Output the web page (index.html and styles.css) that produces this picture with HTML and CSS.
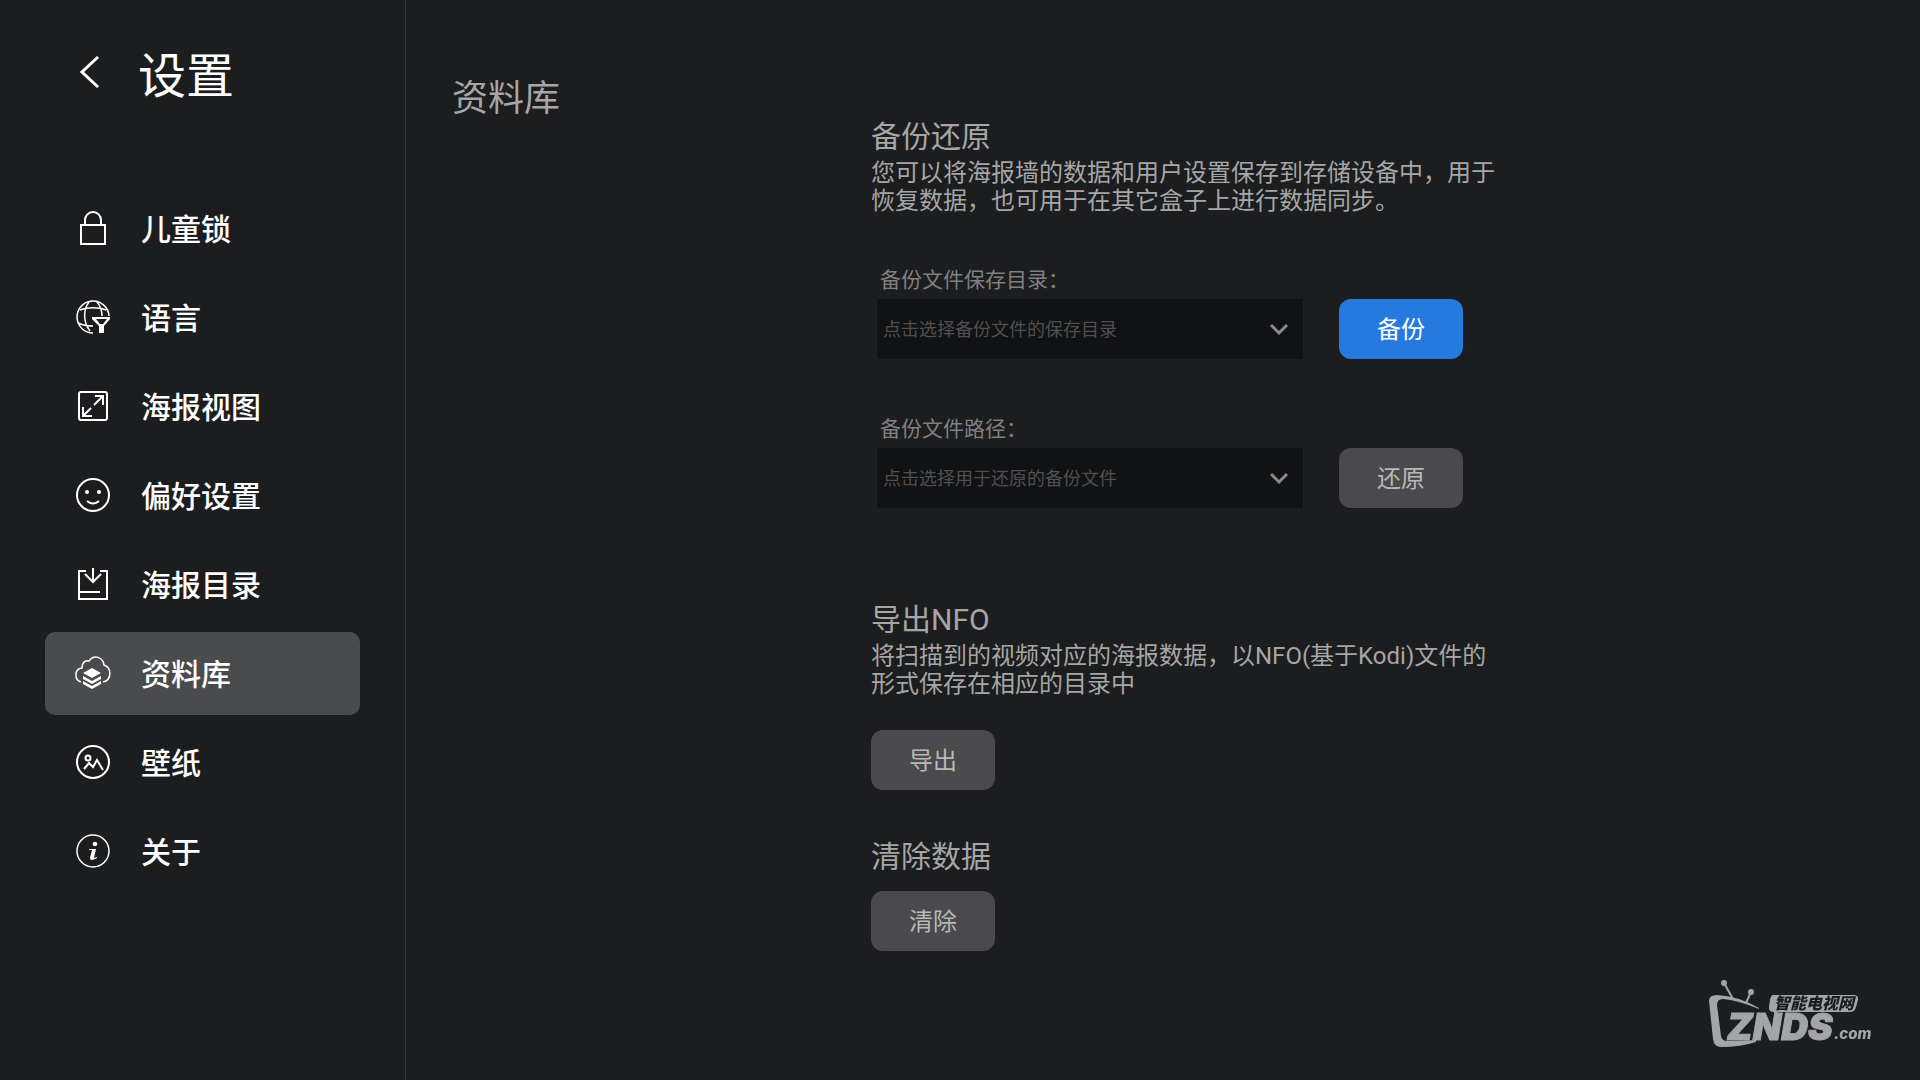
FILE: index.html
```html
<!DOCTYPE html>
<html lang="zh-CN">
  <head>
    <meta charset="UTF-8" />
    <meta name="viewport" content="width=device-width, initial-scale=1.0" />
    <title>设置 - 资料库</title>
    <link rel="stylesheet" href="styles.css">
  </head>
  <body>
    <aside class="sidebar">
      <header class="sidebar-header">
        <button class="back" type="button" aria-label="返回">
          <svg width="20" height="34" viewBox="0 0 20 34"><path d="M18 2 2 17l16 15" /></svg>
        </button>
        <h1>设置</h1>
      </header>
      <nav class="menu">
        <a class="menu-item" href="#lock">
          <svg class="icon" viewBox="0 0 36 36"><path d="M6 15h24v19H6zM10 15V10a8 8 0 0 1 16 0v5" /></svg>
          <span>儿童锁</span>
        </a>
        <a class="menu-item" href="#language">
          <svg class="icon thin" viewBox="0 0 36 36">
            <path d="M18 34A16 16 0 1 1 34 17M5 11c7-3 19-3 26 0M3 24c4 2 9 3 15 3M14 3c-6 8-6 20 1 29M22 3q5 6 5 14" />
            <path class="fill" d="M17 18h18v2l-6 7v7h-5v-7l-7-7zm4 2 4 5h3l4-5z" />
          </svg>
          <span>语言</span>
        </a>
        <a class="menu-item" href="#view">
          <svg class="icon" viewBox="0 0 36 36"><rect x="4" y="4" width="28" height="28" rx="2" /><path d="M20 8h8v9M28 8l-9 9M8 19v9h9M8 28l8-8" /></svg>
          <span>海报视图</span>
        </a>
        <a class="menu-item" href="#preference">
          <svg class="icon" viewBox="0 0 36 36">
            <circle cx="18" cy="18" r="16" /><path d="M12 24q6 5 12 0" />
            <circle class="fill" cx="12" cy="15" r="2" /><circle class="fill" cx="24" cy="15" r="2" />
          </svg>
          <span>偏好设置</span>
        </a>
        <a class="menu-item" href="#folder">
          <svg class="icon" viewBox="0 0 36 36"><path d="M11 5H4v28h28V5h-7M18 2v13M10 8l8 8 8-8M4 26h21" /></svg>
          <span>海报目录</span>
        </a>
        <a class="menu-item active" href="#library" aria-current="page">
          <svg class="icon thin" viewBox="0 0 36 36">
            <path d="M6 27C-1 25-1 14 7 13c0-6 4-8 7-7 5-7 14-4 15 4 8 3 8 15-1 17" />
            <path class="fill" d="m17 13 9 5-9 5-9-5zM8 21l9 5 9-5v3l-9 5-9-5zM8 26l9 5 9-5v3l-9 5-9-5z" />
          </svg>
          <span>资料库</span>
        </a>
        <a class="menu-item" href="#wallpaper">
          <svg class="icon" viewBox="0 0 36 36"><circle cx="18" cy="18" r="16" /><circle cx="13" cy="14" r="2.500" /><path d="m9 25 5-6 4 4 4-7 6 10" /></svg>
          <span>壁纸</span>
        </a>
        <a class="menu-item" href="#about">
          <svg class="icon thin" viewBox="0 0 36 36"><circle cx="18" cy="18" r="16" /><circle class="fill" cx="20" cy="11" r="2.300" /><path class="fill" d="M14 16h7l-2 9 3-1v1q-7 4-7 0l2-8h-3z" /></svg>
          <span>关于</span>
        </a>
      </nav>
    </aside>

    <main class="content">
      <h2 class="page-title">资料库</h2>
      <div class="panel">
        <section class="group">
          <h3>备份还原</h3>
          <p>您可以将海报墙的数据和用户设置保存到存储设备中，用于恢复数据，也可用于在其它盒子上进行数据同步。</p>
          <div class="field">
            <label for="save-dir">备份文件保存目录：</label>
            <div class="field-row">
              <div class="select">
                <select id="save-dir"><option>点击选择备份文件的保存目录</option></select>
                <svg class="arrow" viewBox="0 0 18 14"><path d="m1 2 8 8 8-8" /></svg>
              </div>
              <button class="btn primary" type="button">备份</button>
            </div>
          </div>
          <div class="field">
            <label for="backup-file">备份文件路径：</label>
            <div class="field-row">
              <div class="select">
                <select id="backup-file"><option>点击选择用于还原的备份文件</option></select>
                <svg class="arrow" viewBox="0 0 18 14"><path d="m1 2 8 8 8-8" /></svg>
              </div>
              <button class="btn" type="button">还原</button>
            </div>
          </div>
        </section>

        <section class="group export">
          <h3>导出NFO</h3>
          <p>将扫描到的视频对应的海报数据，以NFO(基于Kodi)文件的形式保存在相应的目录中</p>
          <button class="btn" type="button">导出</button>
        </section>

        <section class="group clear">
          <h3>清除数据</h3>
          <button class="btn" type="button">清除</button>
        </section>
      </div>
    </main>

    <svg class="logo" viewBox="0 0 170 72" role="img" aria-label="智能电视网 ZNDS.com">
      <path class="antenna" d="m16 6 9 16M43 15l-5 11" />
      <circle cx="16" cy="6" r="3" /><circle cx="43" cy="15" r="3" />
      <path d="M51 31Q30 19 9 18q-8 0-8 6l4 38q1 8 8 8 20 0 35-5v-2q-14 1-29 1-5 0-6-5L9 28q0-6 6-6 14 1 36 10z" />
      <path d="M65 18h80q6 0 5 5l-2 7q-1 5-6 5H70l-4 3v-3q-6 0-5-6l1-6q1-5 3-5z" />
      <text class="logo-cn" x="66" y="32">智能电视网</text>
      <text class="logo-name" x="19" y="63">ZNDS</text>
      <text class="logo-com" x="126" y="62">.com</text>
    </svg>
  </body>
</html>
```
FILE: styles.css
```css
* {
  box-sizing: border-box;
}

body {
  margin: 0;
  min-height: 100vh;
  display: flex;
  background: #1c1d1f;
  color: #a6a6a6;
  font-family: Roboto, "Noto Sans CJK SC", sans-serif;
}

h1, h2, h3, p {
  margin: 0;
  font-weight: 400;
}

button, select {
  border: 0;
  font: inherit;
  cursor: pointer;
}

.sidebar {
  flex: 0 0 406px;
  padding: 36px 45px;
  border-right: 1px solid #38393b;
  color: #fff;
}

.sidebar-header {
  display: flex;
  align-items: center;
  gap: 38px;
  height: 72px;
  padding-left: 35px;
}

.sidebar-header h1 {
  font-size: 48px;
}

.back {
  padding: 0;
  background: none;
}

.back svg {
  display: block;
  fill: none;
  stroke: #fff;
  stroke-width: 3;
}

.menu {
  display: flex;
  flex-direction: column;
  gap: 6px;
  margin-top: 79px;
}

.menu-item {
  display: flex;
  align-items: center;
  gap: 30px;
  height: 83px;
  padding: 0 0 2px 30px;
  border-radius: 10px;
  color: #fff;
  font-size: 30px;
  font-weight: 500;
  text-decoration: none;
}

.menu-item span {
  padding-bottom: 2px;
}

.menu-item.active {
  background: #4a4b4d;
}

.icon {
  width: 36px;
  height: 36px;
  fill: none;
  stroke: #fff;
  stroke-width: 2;
}

.icon.thin {
  stroke-width: 1.5;
}

.icon .fill {
  fill: #fff;
  fill-rule: evenodd;
  stroke: none;
}

.content {
  flex: 1;
  display: flex;
  padding: 70px 46px;
}

.page-title {
  width: 419px;
  font-size: 36px;
  line-height: 58px;
}

.panel {
  width: 630px;
  padding-top: 44px;
}

.group h3 {
  font-size: 30px;
  line-height: 45px;
}

.group p {
  font-size: 24px;
  line-height: 28px;
}

.field {
  margin-top: 46px;
  padding-left: 6px;
}

.field + .field {
  margin-top: 51px;
}

.field label {
  display: block;
  padding-left: 3px;
  color: #808082;
  font-size: 21px;
  line-height: 38px;
}

.field-row {
  display: flex;
  gap: 36px;
}

.select {
  position: relative;
  width: 426px;
}

.select select {
  width: 100%;
  height: 60px;
  padding: 0 48px 0 6px;
  appearance: none;
  border-radius: 0;
  background: #111214;
  color: #505050;
  font-size: 18px;
}

.arrow {
  position: absolute;
  top: 24px;
  right: 15px;
  width: 18px;
  height: 14px;
  fill: none;
  stroke: #8a8a8a;
  stroke-width: 3;
  pointer-events: none;
}

.btn {
  width: 124px;
  height: 60px;
  padding: 0 0 3px;
  border-radius: 12px;
  background: #4a4a4c;
  color: #b8b8b8;
  font-size: 24px;
}

.btn.primary {
  background: #267add;
  color: #fff;
}

.export {
  margin-top: 89px;
}

.export .btn {
  margin-top: 32px;
}

.clear {
  margin-top: 44px;
}

.clear .btn {
  margin-top: 12px;
}

.logo {
  position: fixed;
  right: 42px;
  bottom: 31px;
  width: 170px;
  height: 72px;
  fill: #a4a5a6;
}

.logo .antenna {
  fill: none;
  stroke: #a4a5a6;
  stroke-width: 2;
}

.logo-cn {
  fill: #1c1d1f;
  font: italic 900 16px "Noto Sans CJK SC", sans-serif;
}

.logo-name {
  stroke: #a4a5a6;
  stroke-width: 1;
  font: italic 900 37px Inter, sans-serif;
}

.logo-com {
  font: italic 800 15px Inter, sans-serif;
}
```
